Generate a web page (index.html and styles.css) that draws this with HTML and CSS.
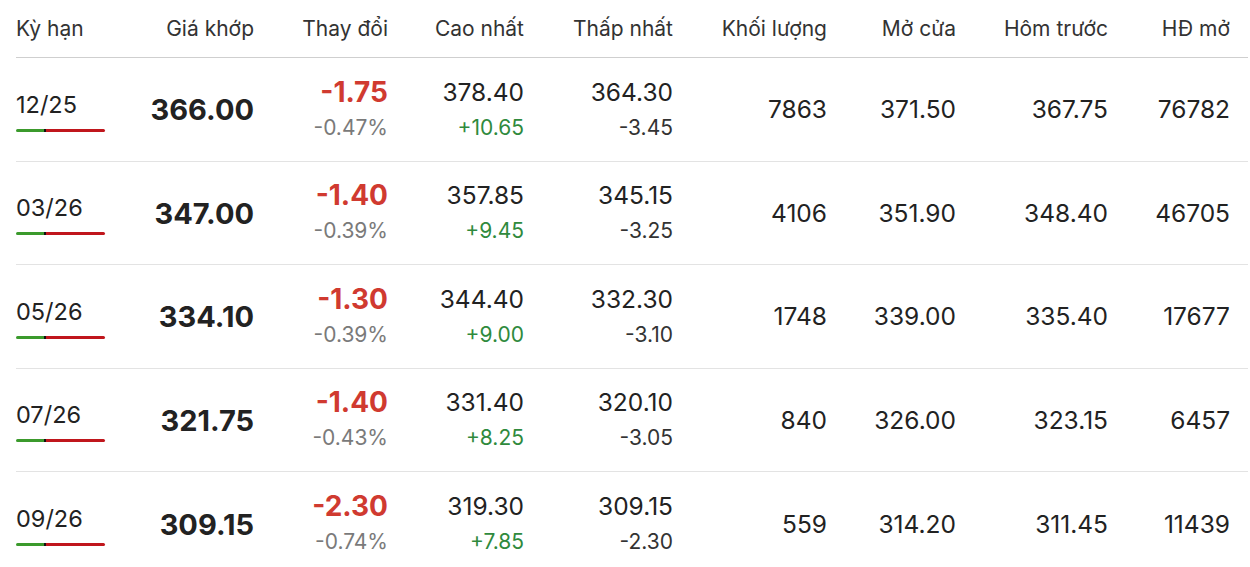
FILE: index.html
```html
<!DOCTYPE html>
<html lang="vi">
<head>
<meta charset="utf-8">
<link rel="stylesheet" href="styles.css">
</head>
<body>
<div class="table">
  <div class="row head">
    <div class="c left">Kỳ hạn</div>
    <div class="c">Giá khớp</div>
    <div class="c">Thay đổi</div>
    <div class="c">Cao nhất</div>
    <div class="c">Thấp nhất</div>
    <div class="c">Khối lượng</div>
    <div class="c">Mở cửa</div>
    <div class="c">Hôm trước</div>
    <div class="c">HĐ mở</div>
  </div>

  <div class="row">
    <div class="c left"><div class="period">12/25</div><div class="bar"><span class="g"></span><span class="k"></span><span class="r"></span></div></div>
    <div class="c price">366.00</div>
    <div class="c stack"><span class="chg down">-1.75</span><span class="sub">-0.47%</span></div>
    <div class="c stack"><span class="main">378.40</span><span class="sub up">+10.65</span></div>
    <div class="c stack"><span class="main">364.30</span><span class="sub dark">-3.45</span></div>
    <div class="c val">7863</div>
    <div class="c val">371.50</div>
    <div class="c val">367.75</div>
    <div class="c val">76782</div>
  </div>

  <div class="row">
    <div class="c left"><div class="period">03/26</div><div class="bar"><span class="g"></span><span class="k"></span><span class="r"></span></div></div>
    <div class="c price">347.00</div>
    <div class="c stack"><span class="chg down">-1.40</span><span class="sub">-0.39%</span></div>
    <div class="c stack"><span class="main">357.85</span><span class="sub up">+9.45</span></div>
    <div class="c stack"><span class="main">345.15</span><span class="sub dark">-3.25</span></div>
    <div class="c val">4106</div>
    <div class="c val">351.90</div>
    <div class="c val">348.40</div>
    <div class="c val">46705</div>
  </div>

  <div class="row">
    <div class="c left"><div class="period">05/26</div><div class="bar"><span class="g"></span><span class="k"></span><span class="r"></span></div></div>
    <div class="c price">334.10</div>
    <div class="c stack"><span class="chg down">-1.30</span><span class="sub">-0.39%</span></div>
    <div class="c stack"><span class="main">344.40</span><span class="sub up">+9.00</span></div>
    <div class="c stack"><span class="main">332.30</span><span class="sub dark">-3.10</span></div>
    <div class="c val">1748</div>
    <div class="c val">339.00</div>
    <div class="c val">335.40</div>
    <div class="c val">17677</div>
  </div>

  <div class="row">
    <div class="c left"><div class="period">07/26</div><div class="bar"><span class="g"></span><span class="k"></span><span class="r"></span></div></div>
    <div class="c price">321.75</div>
    <div class="c stack"><span class="chg down">-1.40</span><span class="sub">-0.43%</span></div>
    <div class="c stack"><span class="main">331.40</span><span class="sub up">+8.25</span></div>
    <div class="c stack"><span class="main">320.10</span><span class="sub dark">-3.05</span></div>
    <div class="c val">840</div>
    <div class="c val">326.00</div>
    <div class="c val">323.15</div>
    <div class="c val">6457</div>
  </div>

  <div class="row last">
    <div class="c left"><div class="period">09/26</div><div class="bar"><span class="g"></span><span class="k"></span><span class="r"></span></div></div>
    <div class="c price">309.15</div>
    <div class="c stack"><span class="chg down">-2.30</span><span class="sub">-0.74%</span></div>
    <div class="c stack"><span class="main">319.30</span><span class="sub up">+7.85</span></div>
    <div class="c stack"><span class="main">309.15</span><span class="sub dark">-2.30</span></div>
    <div class="c val">559</div>
    <div class="c val">314.20</div>
    <div class="c val">311.45</div>
    <div class="c val">11439</div>
  </div>
</div>
</body>
</html>
```

FILE: styles.css
```css
html, body {
  margin: 0;
  padding: 0;
  background: #ffffff;
}
body {
  font-family: Inter, "Noto Sans", "Liberation Sans", sans-serif;
  color: #222222;
}
.table {
  margin-left: 16px;
  width: 1232px;
}
.row {
  display: grid;
  grid-template-columns: 94px 144px 134px 136px 149px 154px 129px 152px 122px;
  padding-right: 18px;
  height: 103.5px;
  box-sizing: border-box;
  border-bottom: 1px solid #e3e3e3;
  align-items: center;
}
.row.last {
  border-bottom: none;
}
.row.head {
  height: 58px;
  border-bottom: 1px solid #cfcfcf;
  font-size: 21px;
  color: #333333;
  padding-bottom: 1px;
}
.c {
  text-align: right;
  white-space: nowrap;
}
.c.left {
  text-align: left;
}
.head .c {
  line-height: 57px;
}
.period {
  font-size: 23.5px;
  line-height: 30px;
  padding-top: 3px;
  color: #222222;
}
.bar {
  display: flex;
  width: 89px;
  height: 3px;
  margin-top: 9px;
}
.bar .g {
  width: 28px;
  background: #3b9a2c;
  border-radius: 2px 0 0 2px;
}
.bar .k {
  width: 2px;
  background: #111111;
}
.bar .r {
  flex: 1;
  background: #c0161c;
  border-radius: 0 2px 2px 0;
}
.price {
  font-size: 29px;
  font-weight: 700;
  color: #222222;
  line-height: 36px;
  padding-top: 2px;
}
.stack {
  display: flex;
  flex-direction: column;
  align-items: flex-end;
  padding-top: 3px;
}
.chg {
  font-size: 28px;
  font-weight: 700;
  line-height: 34px;
}
.down {
  color: #d03a30;
}
.main {
  font-size: 24.5px;
  line-height: 34px;
  color: #222222;
}
.sub {
  font-size: 21px;
  line-height: 38px;
  color: #7a7a7a;
}
.sub.up {
  color: #2f8a3d;
}
.sub.dark {
  color: #333333;
}
.val {
  font-size: 24.5px;
  line-height: 34px;
  color: #222222;
}
```
